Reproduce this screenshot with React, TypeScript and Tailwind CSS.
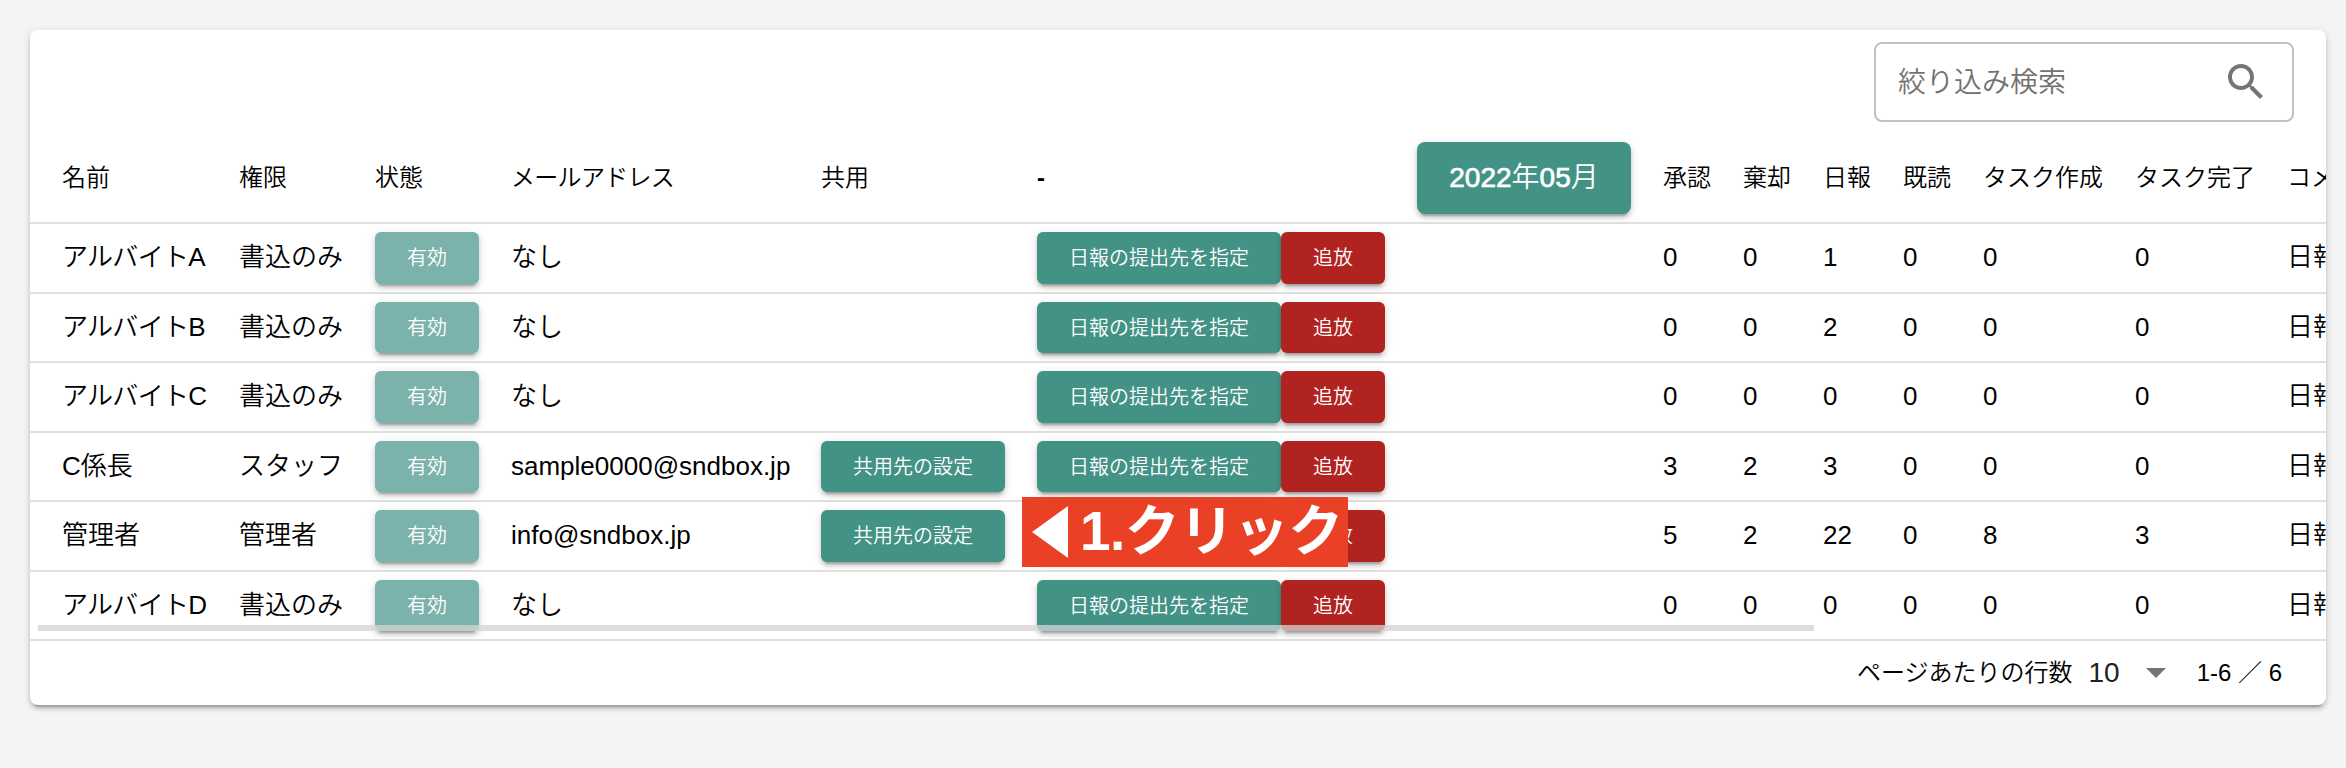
import React from "react";

type Row = {
  name: string;
  role: string;
  mail: string;
  share: boolean;
  counts: number[];
};

const rows: Row[] = [
  { name: "アルバイトA", role: "書込のみ", mail: "なし", share: false, counts: [0, 0, 1, 0, 0, 0] },
  { name: "アルバイトB", role: "書込のみ", mail: "なし", share: false, counts: [0, 0, 2, 0, 0, 0] },
  { name: "アルバイトC", role: "書込のみ", mail: "なし", share: false, counts: [0, 0, 0, 0, 0, 0] },
  { name: "C係長", role: "スタッフ", mail: "sample0000@sndbox.jp", share: true, counts: [3, 2, 3, 0, 0, 0] },
  { name: "管理者", role: "管理者", mail: "info@sndbox.jp", share: true, counts: [5, 2, 22, 0, 8, 3] },
  { name: "アルバイトD", role: "書込のみ", mail: "なし", share: false, counts: [0, 0, 0, 0, 0, 0] },
];

const columns =
  "grid items-center whitespace-nowrap pl-8 grid-cols-[177px_136px_136px_310px_216px_380px_246px_80px_80px_80px_80px_152px_152px_400px]";

const elevation =
  "shadow-[0_6px_2px_-4px_rgba(0,0,0,0.2),0_4px_4px_0_rgba(0,0,0,0.14),0_2px_10px_0_rgba(0,0,0,0.12)]";

function Button({ className, children }: { className: string; children: React.ReactNode }) {
  return (
    <button
      className={`flex h-[51.5px] items-center rounded-[6px] px-8 pt-px text-[20px] leading-none font-[350] text-white ${elevation} ${className}`}
    >
      {children}
    </button>
  );
}

export default function App() {
  return (
    <div className="h-[768px] w-[2346px] overflow-hidden bg-[#f4f4f4] pt-[30px] pl-[30px] font-['Liberation_Sans','Noto_Sans_CJK_JP',sans-serif] font-[350] text-black">
      <div className="flex h-[675px] w-[2296px] flex-col rounded-[8px] bg-white shadow-[0_6px_2px_-4px_rgba(0,0,0,0.2),0_4px_4px_0_rgba(0,0,0,0.14),0_2px_10px_0_rgba(0,0,0,0.12)]">
        <div className="flex h-[92px] justify-end pt-3 pr-8">
          <div className="flex h-20 w-[420px] items-center justify-between rounded-[8px] border-2 border-[#c1c1c1] px-[22px] text-[28px] text-[#727272]">
            <span className="pt-[2px]">絞り込み検索</span>
            <svg viewBox="0 0 24 24" className="size-12" fill="#757575">
              <path d="M15.5 14h-.79l-.28-.27C15.41 12.59 16 11.11 16 9.5 16 5.91 13.09 3 9.5 3S3 5.91 3 9.5 5.91 16 9.5 16c1.61 0 3.09-.59 4.23-1.57l.27.28v.79l5 4.99L20.49 19l-4.99-5zm-6 0C7.01 14 5 11.99 5 9.5S7.01 5 9.5 5 14 7.01 14 9.5 11.99 14 9.5 14z" />
            </svg>
          </div>
        </div>

        <div className="relative overflow-hidden">
          <div className={`${columns} h-[102px] w-[2700px] border-b-2 border-[#e0e0e0] pt-3 text-[24px]`}>
            <span>名前</span>
            <span>権限</span>
            <span>状態</span>
            <span className="tracking-[-0.7px]">メールアドレス</span>
            <span>共用</span>
            <span className="font-bold">-</span>
            <span
              className={`flex h-[72px] w-[214px] items-center justify-center rounded-[8px] bg-[#439286] text-[28px] text-white ${elevation}`}
            >
              <span className="[-webkit-text-stroke:0.7px_white]">2022</span>年
              <span className="[-webkit-text-stroke:0.7px_white]">05</span>月
            </span>
            <span>承認</span>
            <span>棄却</span>
            <span>日報</span>
            <span>既読</span>
            <span>タスク作成</span>
            <span>タスク完了</span>
            <span>コメント</span>
          </div>

          {rows.map((row) => (
            <div
              key={row.name}
              className={`${columns} h-[69.5px] w-[2700px] border-b-2 border-[#e0e0e0] text-[26px]`}
            >
              <span className={row.name.startsWith("アルバイト") ? "tracking-[-0.7px]" : ""}>{row.name}</span>
              <span>{row.role}</span>
              <div className="flex">
                <Button className="bg-[#7bb2ab]">有効</Button>
              </div>
              <span>{row.mail}</span>
              <div className="flex">{row.share && <Button className="bg-[#439286]">共用先の設定</Button>}</div>
              <div className="flex">
                <Button className="bg-[#439286]">日報の提出先を指定</Button>
                <Button className="bg-[#b02320]">追放</Button>
              </div>
              <span />
              {row.counts.map((n, i) => (
                <span key={i}>{n}</span>
              ))}
              <span>日報</span>
            </div>
          ))}

          <div className="absolute bottom-[10px] left-2 h-[6px] w-[1776px] bg-[rgba(211,211,211,0.76)]" />
          <div className="absolute top-[375px] left-[992px] flex h-[70px] w-[326px] items-center bg-[#ea4025] pb-px pl-[10px] text-[55px] leading-none font-bold tracking-[-0.5px] whitespace-nowrap text-white">
            <svg viewBox="0 0 36 52" className="mr-3 h-[52px] w-9 shrink-0" fill="#fff">
              <path d="M36 0v52L0 26z" />
            </svg>
            <span>1.クリック</span>
          </div>
        </div>

        <div className="flex flex-1 items-center justify-end pr-11 text-[24px]">
          <span>ページあたりの行数</span>
          <span className="ml-4 text-[28px] text-[#212121]">10</span>
          <svg viewBox="0 0 20 10" className="mr-[31px] ml-[26px] h-[10px] w-5" fill="#757575">
            <path d="M0 0h20L10 10z" />
          </svg>
          <span>1-6 ／ 6</span>
        </div>
      </div>
    </div>
  );
}
